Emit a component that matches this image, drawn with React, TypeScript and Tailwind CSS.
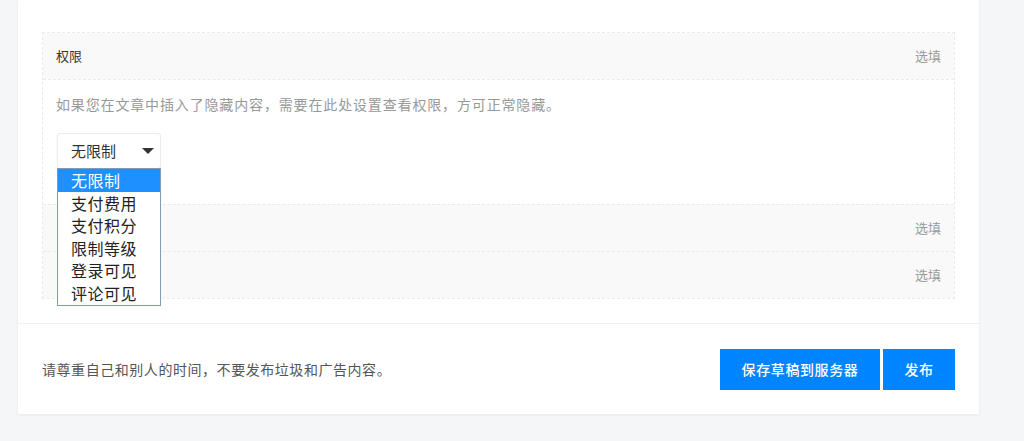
import React, { useState } from "react";

const options = ["无限制", "支付费用", "支付积分", "限制等级", "登录可见", "评论可见"];

function OptionalRow() {
  return (
    <div className="flex h-[47px] items-center justify-end border-t border-dashed border-[#eaeaea] bg-[#f9f9f9] px-[13px]">
      <span className="text-[13px] text-[#999]">选填</span>
    </div>
  );
}

export default function App() {
  const [selected, setSelected] = useState(0);

  return (
    <div
      className="min-h-[441px] bg-[#f5f6f7] pl-[18px] pr-[45px]"
      style={{ fontFamily: '"Noto Sans CJK SC", "Noto Sans", sans-serif' }}
    >
      <div className="w-[961px] bg-white shadow-[0_1px_3px_rgba(0,0,0,0.06)]">
        <div className="px-6 pt-8 pb-6">
          <div className="border border-dashed border-[#eaeaea]">
            <div className="flex h-[46px] items-center justify-between bg-[#f9f9f9] px-[13px]">
              <span className="text-[13px] text-[#333]">权限</span>
              <span className="text-[13px] text-[#999]">选填</span>
            </div>
            <div className="border-t border-dashed border-[#eaeaea] px-[13px] pt-[14px] pb-[35px]">
              <p className="text-[14px] leading-[20px] tracking-[0.85px] text-[#999]">
                如果您在文章中插入了隐藏内容，需要在此处设置查看权限，方可正常隐藏。
              </p>
              <div className="relative mt-[19px] ml-px w-[104px]">
                <div className="flex h-[36px] items-center justify-between rounded-[3px] border border-[#ececec] bg-white pl-[13px] pr-[6px] shadow-[0_1px_2px_rgba(0,0,0,0.05)]">
                  <span className="text-[15px] text-[#333]">{options[selected]}</span>
                  <svg width="12" height="8" viewBox="0 0 12 8">
                    <path d="M0 1h12L6 7z" fill="#333" />
                  </svg>
                </div>
                <ul className="absolute top-[35px] left-0 z-10 w-[104px] border border-[#7f9db9] bg-white">
                  {options.map((o, i) => (
                    <li
                      key={o}
                      onClick={() => setSelected(i)}
                      className={`h-[22.6px] cursor-default pl-[13px] text-[16px] leading-[22.6px] tracking-[0.5px] ${
                        i === selected ? "bg-[#1e90ff] text-white" : "text-[#222]"
                      }`}
                    >
                      {o}
                    </li>
                  ))}
                </ul>
              </div>
            </div>
            <OptionalRow />
            <OptionalRow />
          </div>
        </div>
        <div className="flex h-[91px] items-center justify-between border-t border-[#f0f0f0] px-6">
          <p className="text-[14px] tracking-[0.55px] text-[#555]">
            请尊重自己和别人的时间，不要发布垃圾和广告内容。
          </p>
          <div className="flex gap-[3px]">
            <button className="h-[41px] w-[160px] bg-[#0084ff] text-[14px] font-medium tracking-[0.6px] text-white">
              保存草稿到服务器
            </button>
            <button className="h-[41px] w-[72px] bg-[#0084ff] text-[14px] font-medium tracking-[0.6px] text-white">
              发布
            </button>
          </div>
        </div>
      </div>
    </div>
  );
}
